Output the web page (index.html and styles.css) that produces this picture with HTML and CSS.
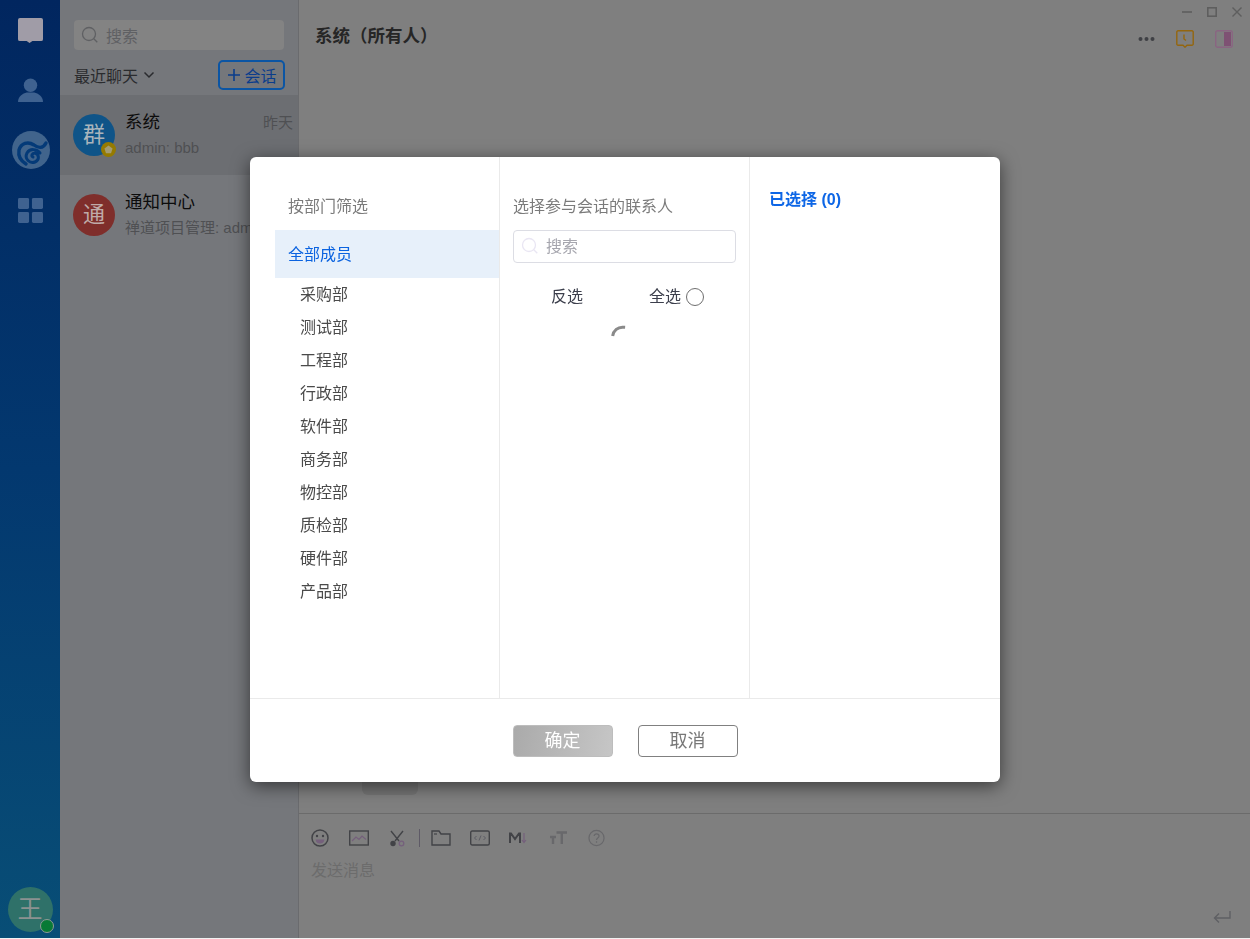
FILE: index.html
```html
<!DOCTYPE html>
<html lang="zh">
<head>
<meta charset="utf-8">
<title>会话</title>
<link rel="stylesheet" href="styles.css">
</head>
<body>
<div class="app">
  <nav class="rail">
    <div class="rail-icons">
      <svg class="rail-chat" width="25" height="25" viewBox="0 0 26 26"><path d="M2 0h22a2 2 0 0 1 2 2v20a2 2 0 0 1-2 2H15l-3 2-3-2H2a2 2 0 0 1-2-2V2a2 2 0 0 1 2-2z" fill="#a09ca7"/></svg>
      <svg class="rail-user" width="25" height="25" viewBox="0 0 26 26"><circle cx="13" cy="7.500" r="7" fill="#3f6290"/><path d="M0 25c0-6 5-9 9-10h8c4 1 9 4 9 10z" fill="#3f6290"/></svg>
      <svg class="rail-logo" width="38" height="38" viewBox="0 0 38 38"><circle cx="19" cy="19" r="19" fill="#41648c"/><path d="M34 12c-3 6-8 5-12 2-6-4-13-2-15 5-1 6 2 11 7 14" fill="none" stroke="#043a78" stroke-width="3.400" stroke-linecap="round"/><path d="M28 22c-3-4-10-5-13 0-3 6 3 11 8 9 5-2 4-8 0-9-3 0-4 3-2 4" fill="none" stroke="#043a78" stroke-width="3" stroke-linecap="round"/></svg>
      <svg class="rail-grid" width="25" height="25" viewBox="0 0 26 26"><g fill="#3f6290"><rect width="11.500" height="11.500" rx="1.500"/><rect x="14.500" width="11.500" height="11.500" rx="1.500"/><rect y="14.500" width="11.500" height="11.500" rx="1.500"/><rect x="14.500" y="14.500" width="11.500" height="11.500" rx="1.500"/></g></svg>
    </div>
    <div class="me">王<span class="me-dot"></span></div>
  </nav>

  <aside class="list">
    <div class="list-search">
      <svg width="18" height="18" viewBox="0 0 18 18"><circle cx="8" cy="8" r="6.500" fill="none" stroke="#5f6063" stroke-width="1.300"/><path d="M12.800 12.800l3.500 3.500" stroke="#5f6063" stroke-width="1.300"/></svg>
      <span>搜索</span>
    </div>
    <div class="list-bar">
      <div class="list-filter">最近聊天
        <svg width="12" height="8" viewBox="0 0 12 8"><path d="M1.500 1.500L6 6l4.500-4.500" fill="none" stroke="#2a2b2e" stroke-width="1.500"/></svg>
      </div>
      <div class="new-chat">
        <svg width="14" height="14" viewBox="0 0 14 14"><path d="M7 1v12M1 7h12" stroke="#0a3d8c" stroke-width="1.600"/></svg>会话
      </div>
    </div>
    <div class="chat chat-active">
      <div class="avatar avatar-blue">群<span class="avatar-star"><svg width="9" height="9" viewBox="0 0 10 10"><path d="M5 .5l4.500 3.300-1.700 5.500H2.200L.5 3.800z" fill="#a39c72"/></svg></span></div>
      <div class="chat-body">
        <div class="chat-top"><span class="chat-name">系统</span><span class="chat-time">昨天</span></div>
        <div class="chat-sub">admin: bbb</div>
      </div>
    </div>
    <div class="chat">
      <div class="avatar avatar-red">通</div>
      <div class="chat-body">
        <div class="chat-top"><span class="chat-name">通知中心</span></div>
        <div class="chat-sub">禅道项目管理: admin</div>
      </div>
    </div>
  </aside>

  <main class="main">
    <header class="head">
      <h1 class="head-title">系统（所有人）</h1>
      <div class="win">
        <svg width="10" height="10" viewBox="0 0 10 10"><path d="M0 5h10" stroke="#5e5e5e" stroke-width="1.600"/></svg>
        <svg width="10" height="10" viewBox="0 0 10 10"><rect x=".8" y=".8" width="8.400" height="8.400" fill="none" stroke="#5e5e5e" stroke-width="1.600"/></svg>
        <svg width="10" height="10" viewBox="0 0 10 10"><path d="M.5.500l9 9M9.500.500l-9 9" stroke="#5e5e5e" stroke-width="1.400"/></svg>
      </div>
      <div class="head-tools">
        <svg width="17" height="6" viewBox="0 0 17 6"><g fill="#3f4045"><circle cx="2.500" cy="3" r="2"/><circle cx="8.500" cy="3" r="2"/><circle cx="14.500" cy="3" r="2"/></g></svg>
        <svg class="tool-clock" width="18" height="18" viewBox="0 0 18 18"><path d="M2 .8h14A1.200 1.200 0 0 1 17.200 2v12a1.200 1.200 0 0 1-1.200 1.200h-5L9 17.200l-2-2H2A1.200 1.200 0 0 1 .8 14V2A1.200 1.200 0 0 1 2 .8z" fill="none" stroke="#94660f" stroke-width="1.400"/><path d="M8 4.500v4.500l2 1.500" fill="none" stroke="#94660f" stroke-width="1.400"/></svg>
        <svg class="tool-panel" width="18" height="18" viewBox="0 0 18 18"><rect x=".7" y=".7" width="16.600" height="16.600" rx="2" fill="none" stroke="#8a6582" stroke-width="1.400"/><rect x="9" y="2" width="7" height="14" fill="#7e5173"/></svg>
      </div>
    </header>
    <div class="feed"><div class="bubble"></div></div>
    <section class="composer">
      <div class="tools">
        <svg width="18" height="18" viewBox="0 0 18 18"><circle cx="9" cy="9" r="8" fill="none" stroke="#424347" stroke-width="1.500"/><circle cx="6" cy="7" r="1.200" fill="#424347"/><circle cx="12" cy="7" r="1.200" fill="#424347"/><path d="M4.500 10.500h9c-.5 3-2.500 4-4.500 4s-4-1-4.500-4z" fill="#75607c"/></svg>
        <svg class="t-image" width="20" height="16" viewBox="0 0 20 16"><rect x=".7" y="1" width="18.600" height="14" fill="none" stroke="#424347" stroke-width="1.400"/><path d="M3 11l4-4 3 2.500L13 6l4 3.500" fill="none" stroke="#75607c" stroke-width="1.200"/></svg>
        <svg class="t-cut" width="16" height="17" viewBox="0 0 16 17"><path d="M2 1l8 10M14 1L6 11" stroke="#424347" stroke-width="1.400"/><circle cx="4" cy="13.500" r="2.700" fill="#424347"/><circle cx="12.500" cy="13.500" r="2.300" fill="none" stroke="#75607c" stroke-width="1.300"/></svg>
        <span class="tool-sep"></span>
        <svg class="t-folder" width="20" height="16" viewBox="0 0 20 16"><path d="M1 1h7l2 3h9v11H1z" fill="none" stroke="#424347" stroke-width="1.400"/><path d="M3 4h3" stroke="#424347" stroke-width="1.200"/></svg>
        <svg class="t-code" width="20" height="16" viewBox="0 0 20 16"><rect x=".7" y="1" width="18.600" height="14" rx="1.500" fill="none" stroke="#424347" stroke-width="1.400"/><path d="M6.500 6L4.500 8l2 2M13.500 6l2 2-2 2M11 5.500L9 10.500" fill="none" stroke="#5c5c64" stroke-width="1"/></svg>
        <svg class="t-md" width="18" height="12" viewBox="0 0 18 12"><path d="M1 11V1.500h1L6 7l4-5.500h1V11" fill="none" stroke="#424347" stroke-width="2"/><path d="M15 1v9M13 8l2 2.500L17 8" fill="none" stroke="#75607c" stroke-width="1.200"/></svg>
        <svg class="t-size" width="17" height="14" viewBox="0 0 17 14"><path d="M6.500 1.500H17M11.800 1.500V13M0 6h6M3 6v7" fill="none" stroke="#68686b" stroke-width="2.400"/></svg>
        <svg class="t-help" width="17" height="18" viewBox="0 0 18 18"><circle cx="9" cy="9" r="8" fill="none" stroke="#68686b" stroke-width="1.300"/><path d="M6.500 7c0-3.300 5.200-3.300 5.200 0 0 2-2.700 2-2.700 4M9 12.500v1.500" fill="none" stroke="#68686b" stroke-width="1.300"/></svg>
      </div>
      <div class="composer-hint">发送消息</div>
      <svg class="send" width="18" height="14" viewBox="0 0 18 14"><path d="M17 1v7H2M6 3.500L1.500 8 6 12.500" fill="none" stroke="#5f6064" stroke-width="1.400"/></svg>
    </section>
  </main>
</div>

<div class="backdrop">
  <div class="modal">
    <div class="modal-cols">
      <div class="col col-depts">
        <div class="col-title">按部门筛选</div>
        <div class="dept-all">全部成员</div>
        <ul class="depts">
          <li>采购部</li><li>测试部</li><li>工程部</li><li>行政部</li><li>软件部</li>
          <li>商务部</li><li>物控部</li><li>质检部</li><li>硬件部</li><li>产品部</li>
        </ul>
      </div>
      <div class="col col-people">
        <div class="col-title">选择参与会话的联系人</div>
        <div class="people-search">
          <svg width="18" height="18" viewBox="0 0 18 18"><circle cx="8" cy="8" r="6.500" fill="none" stroke="#e9e6f3" stroke-width="1.300"/><path d="M12.800 12.800l3.500 3.500" stroke="#e9e6f3" stroke-width="1.300"/></svg>
          <span>搜索</span>
        </div>
        <div class="people-actions">
          <span class="act-invert">反选</span>
          <span class="act-all">全选<i class="radio"></i></span>
        </div>
        <svg class="spinner" width="18" height="12" viewBox="0 0 18 12"><path d="M2 11.500C2.500 6 6.500 2 12 2h5" transform="rotate(4 9 6)" fill="none" stroke="#8a8a8a" stroke-width="3" stroke-dasharray="17 40"/></svg>
      </div>
      <div class="col col-picked">已选择 (0)</div>
    </div>
    <div class="modal-foot">
      <button class="btn btn-ok" type="button">确定</button>
      <button class="btn btn-cancel" type="button">取消</button>
    </div>
  </div>
</div>
</body>
</html>
```
FILE: styles.css
```css
* { box-sizing: border-box; }
html, body { margin: 0; height: 100%; overflow: hidden; background: #f2f2f2; }
body { font-family: "Liberation Sans", "Noto Sans CJK SC", sans-serif; }

.app { display: flex; height: 938px; }

.rail {
  width: 60px; flex: none; display: flex; flex-direction: column; justify-content: space-between; align-items: center;
  background: linear-gradient(180deg, #01265f 0%, #03386f 50%, #084e76 100%);
}
.rail-icons { display: flex; flex-direction: column; align-items: center; padding: 18px 0 0 1px; }
.rail-user { margin-top: 35px; }
.rail-logo { margin-top: 28px; }
.rail-grid { margin-top: 29px; }
.me {
  position: relative; width: 45px; height: 45px; margin-bottom: 6px; border-radius: 50%;
  background: #2f7169; color: #8b9291; font-size: 25px; line-height: 45px; text-align: center;
}
.me-dot {
  position: absolute; left: 32px; top: 32px; width: 14px; height: 14px; border-radius: 50%;
  background: #087a35; border: 1px solid #8f9a96;
}

.list { width: 239px; flex: none; background: #75777b; border-right: 1px solid #6a6b6e; }
.list-search {
  display: flex; align-items: center; gap: 7px; height: 30px; margin: 20px 14px 0 14px; padding-left: 7px;
  background: #838383; border-radius: 4px; color: #5f6063; font-size: 16px;
}
.list-bar { display: flex; justify-content: space-between; align-items: center; height: 30px; margin: 10px 13px 5px 14px; }
.list-filter { display: flex; align-items: center; gap: 5px; color: #2a2b2e; font-size: 16px; }
.new-chat {
  display: flex; align-items: center; justify-content: center; gap: 3px; width: 67px; height: 30px; padding-left: 1px;
  border: 2px solid #0b55a4; border-radius: 5px; color: #0a3d8c; font-size: 16px;
}
.chat { display: flex; align-items: flex-start; height: 80px; padding: 19px 5px 0 13px; }
.chat-active { background: #6c6e72; }
.avatar {
  position: relative; flex: none; width: 42px; height: 42px; border-radius: 50%;
  color: #aab4bc; font-size: 22px; line-height: 42px; text-align: center;
}
.avatar-blue { background: #0f5488; }
.avatar-red { background: #7f2e2b; color: #bfaaa8; }
.avatar-star {
  position: absolute; left: 28px; top: 28px; width: 15px; height: 15px; border-radius: 50%;
  background: #957a00; display: flex; align-items: center; justify-content: center;
}
.chat-body { flex: 1; min-width: 0; margin-left: 10px; margin-top: -8px; }
.chat-top { display: flex; justify-content: space-between; align-items: center; height: 30px; }
.chat-name { color: #0c0c0c; font-size: 17.500px; margin-top: -2px; }
.chat-time { color: #4f5053; font-size: 15px; }
.chat-sub { color: #4f5053; font-size: 15px; line-height: 22px; margin-top: 1px; white-space: nowrap; overflow: hidden; }

.main { flex: 1; display: flex; flex-direction: column; background: #7f7f7f; min-width: 0; }
.head { position: relative; height: 72px; padding: 23px 0 0 16px; }
.head-title { margin: 0; color: #262626; font-size: 17.500px; font-weight: 700; line-height: 27px; }
.win { position: absolute; right: 8px; top: 7px; display: flex; gap: 15px; }
.head-tools { position: absolute; right: 17px; top: 30px; display: flex; align-items: center; }
.tool-clock { margin-left: 21px; }
.tool-panel { margin-left: 21px; }
.feed { flex: 1; position: relative; }
.bubble { position: absolute; left: 63px; bottom: 18px; width: 56px; height: 30px; background: #747474; border-radius: 6px; }
.composer { position: relative; height: 125px; border-top: 1px solid #6b6b6b; padding: 14px 0 0 12px; }
.tools { display: flex; align-items: center; height: 20px; }
.t-image { margin-left: 20px; }
.t-cut { margin-left: 20px; }
.tool-sep { width: 1px; height: 18px; margin-left: 14px; background: #5e5a66; }
.t-folder { margin-left: 11px; }
.t-code { margin-left: 19px; }
.t-md { margin-left: 19px; }
.t-size { margin-left: 23px; }
.t-help { margin-left: 21px; }
.composer-hint { margin-top: 11px; color: #6c6c6c; font-size: 16px; line-height: 24px; }
.send { position: absolute; right: 19px; bottom: 14px; }

.backdrop { position: fixed; inset: 0; display: flex; align-items: center; justify-content: center; }
.modal {
  width: 750px; height: 625px; display: flex; flex-direction: column; background: #fff; border-radius: 6px;
  box-shadow: 0 4px 18px rgba(0, 0, 0, .55);
}
.modal-cols { flex: 1; display: flex; border-bottom: 1px solid #eaeaea; min-height: 0; }
.col { width: 250px; flex: none; }
.col-depts { padding: 38px 0 0 25px; border-right: 1px solid #eaeaea; }
.col-people { padding: 38px 13px 0 13px; border-right: 1px solid #eaeaea; position: relative; }
.col-picked { padding: 32px 0 0 19px; color: #0d66e6; font-size: 16px; font-weight: 700; line-height: 22px; }
.col-title { color: #7b7b7b; font-size: 16px; line-height: 24px; }
.col-depts .col-title { padding-left: 13px; }
.dept-all { margin-top: 11px; height: 48px; padding: 2px 0 0 13px; background: #e7f0fa; color: #0b63e0; font-size: 16px; line-height: 46px; }
.depts { list-style: none; margin: 0; padding: 0 0 0 25px; color: #4a4a4a; font-size: 16px; }
.depts li { height: 33px; line-height: 33px; }
.people-search {
  display: flex; align-items: center; gap: 7px; width: 223px; height: 33px; margin-top: 11px; padding: 0 0 4px 7px;
  border: 1px solid #dcdde4; border-radius: 4px; color: #a6a6ae; font-size: 16px;
}
.people-search svg { margin-top: 3px; }
.people-actions { display: flex; height: 18px; margin-top: 25px; color: #3c3f4c; font-size: 16px; line-height: 18px; }
.act-invert { margin-left: 38px; }
.act-all { display: flex; align-items: center; gap: 5px; margin-left: 66px; }
.radio { width: 18px; height: 18px; border: 1px solid #6e6e6e; border-radius: 50%; }
.spinner { display: block; margin: 19px 0 0 98px; }
.modal-foot { height: 83px; flex: none; display: flex; justify-content: center; align-items: flex-start; gap: 25px; padding-top: 26px; }
.btn { width: 100px; height: 32px; border-radius: 4px; font: 18px/1 "Liberation Sans", "Noto Sans CJK SC", sans-serif; padding: 0; }
.btn-ok { background: linear-gradient(100deg, #aaaaaa, #c6c6c6); color: #fff; border: 1px solid #bdbdbd; }
.btn-cancel { background: #fff; color: #777; border: 1px solid #808080; }
```
